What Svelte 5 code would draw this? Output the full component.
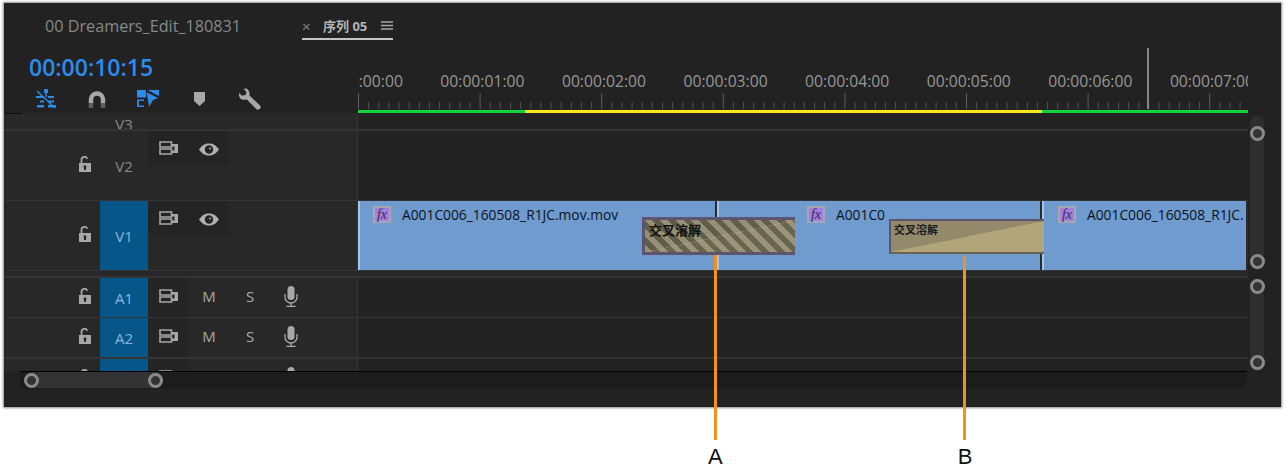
<script>
  const rulerLabels = ['00:00:00:00', '00:00:01:00', '00:00:02:00', '00:00:03:00', '00:00:04:00', '00:00:05:00', '00:00:06:00', '00:00:07:00']
  const majorStep = 121.6
  const minorStep = majorStep / 12
  const ticks = Array.from({ length: 88 }, (_, i) => i)

  const clips = [
    { width: 359, pad: 13, name: 'A001C006_160508_R1JC.mov.mov' },
    { width: 325, pad: 88, name: 'A001C0' },
    { width: 206, pad: 14, name: 'A001C006_160508_R1JC.' }
  ]
</script>

{#snippet lock()}
  <svg width="14" height="16" viewBox="0 0 14 16">
    <path d="M3.500 7V4a3 3 0 0 1 5.800-1.200" fill="none" stroke="#a8a8a8" stroke-width="1.800" />
    <path fill-rule="evenodd" fill="#a8a8a8" d="M1 7h12v9H1zM7 9.300a1.500 1.500 0 0 0-1 2.600V14h2v-2.100a1.500 1.500 0 0 0-1-2.600z" />
  </svg>
{/snippet}

{#snippet sync()}
  <svg width="19" height="14" viewBox="0 0 19 14">
    <path fill="none" stroke="#a8a8a8" stroke-width="1.600" d="M1 1h11.500v5H1zM1 8h11.500v5H1z" />
    <path fill="#a8a8a8" d="M13 3h6v9h-6V9.500h2.500V5.500H13z" />
  </svg>
{/snippet}

{#snippet eye()}
  <svg class="eye" width="20" height="13" viewBox="0 0 20 13">
    <path fill-rule="evenodd" fill="#b0b0b0" d="M0 6.500C3 2 6.500 0.500 10 0.500S17 2 20 6.500C17 11 13.500 12.500 10 12.500S3 11 0 6.500zM10 2.300a4.200 4.200 0 1 0 0 8.400 4.200 4.200 0 0 0 0-8.400z" />
    <circle cx="10" cy="6.500" r="2.800" fill="#262626" />
    <circle cx="11" cy="5.500" r="1" fill="#b0b0b0" />
  </svg>
{/snippet}

{#snippet mic()}
  <svg width="14" height="21" viewBox="0 0 14 21">
    <rect x="3.500" y="0" width="7" height="14" rx="3.500" fill="#a8a8a8" />
    <path d="M1 8v3a6 6 0 0 0 12 0V8" fill="none" stroke="#a8a8a8" stroke-width="1.300" />
    <path d="M7 17v3M2.500 20.300h9" stroke="#a8a8a8" stroke-width="1.300" />
  </svg>
{/snippet}

{#snippet handle()}
  <span class="handle"></span>
{/snippet}

{#snippet fx()}
  <span class="fx">fx</span>
{/snippet}

<div class="page">
  <div class="panel">
    <div class="tabs">
      <span class="project-tab">00 Dreamers_Edit_180831</span>
      <div class="seq-tab">
        <span class="close">×</span>
        <span class="seq-name">序列 05</span>
        <svg width="12" height="9" viewBox="0 0 12 9"><path d="M0 1h12M0 4.500h12M0 8h12" stroke="#a8a8a8" stroke-width="1.300" /></svg>
      </div>
    </div>

    <div class="top">
      <div class="controls">
        <div class="timecode">00:00:10:15</div>
        <div class="tools">
          <span class="tool">
            <svg width="22" height="20" viewBox="0 0 22 20">
              <g fill="#2d8ceb">
                <rect x="9" y="0" width="4" height="4" />
                <rect x="10.300" y="4" width="1.400" height="4" />
                <rect x="1" y="7" width="8" height="2" /><rect x="13" y="7" width="6" height="2" />
                <rect x="5" y="11.500" width="4" height="2" /><rect x="13" y="11.500" width="6" height="2" />
                <rect x="2" y="16" width="7" height="2.500" /><rect x="13" y="16" width="8" height="2.500" />
              </g>
              <path d="M2 2l18 17" stroke="#2d8ceb" stroke-width="1.500" />
            </svg>
          </span>
          <span class="tool">
            <svg width="18" height="17" viewBox="0 0 18 17">
              <path d="M3 12V8.500a6 6 0 0 1 12 0V12" fill="none" stroke="#a8a8a8" stroke-width="4.500" />
              <path d="M0.750 12h4.500v5H0.750zM12.750 12h4.500v5h-4.500z" fill="#5e5e5e" />
            </svg>
          </span>
          <span class="tool">
            <svg width="22" height="18" viewBox="0 0 22 18">
              <g fill="#2d8ceb">
                <path d="M0 0h9v7.500H0zM0 9.500h7v1.600H1.800v4.300H7V17H0z" />
                <path d="M10.500 0H22v6z" />
                <path d="M9 1.500l13 6.500-6 2.500L12 18z" stroke="#222" stroke-width="0.800" />
              </g>
            </svg>
          </span>
          <span class="tool">
            <svg width="11" height="14" viewBox="0 0 11 14"><path fill="#a8a8a8" d="M0 0h11v9l-5.500 5L0 9z" /></svg>
          </span>
          <span class="tool">
            <svg width="22" height="22" viewBox="0 0 22 22">
              <path fill="#a8a8a8" d="M7.500 0.500L4.500 0.800 7.500 4 6.500 7 3 7.800 0 5c-.4 3 .6 5.500 3 6.500 1.600.6 3.300.3 4.500-.3l10 10c1 .8 2.800 .6 3.700-.6.800-1 .7-2.300-.2-3.200L10.500 7.500c.5-3-.8-6-3-7z" />
            </svg>
          </span>
        </div>
      </div>
      <div class="ruler">
        <div class="ruler-labels">
          {#each rulerLabels as label}
            <span>{label}</span>
          {/each}
        </div>
        <svg class="ticks" width="890" height="17" viewBox="0 0 890 17">
          {#each ticks as i}
            <line x1={i * minorStep + 0.5} x2={i * minorStep + 0.5} y1={i % 12 === 0 ? 0 : 9} y2="16" stroke={i % 12 === 0 ? '#5c5c5c' : '#505050'} />
          {/each}
        </svg>
        <div class="render-bar">
          <i class="green" style="width:167px"></i>
          <i class="yellow" style="width:517px"></i>
          <i class="green" style="width:206px"></i>
        </div>
        <div class="playhead"></div>
      </div>
    </div>

    <div class="body">
      <div class="tracks">
        <div class="row v3">
          <div class="head"><span class="lock-cell"></span><span class="tname">V3</span></div>
          <div class="lane"></div>
        </div>
        <div class="row tall">
          <div class="head">
            <span class="lock-cell">{@render lock()}</span>
            <span class="tname">V2</span>
            <div class="btns"><span>{@render sync()}</span><span>{@render eye()}</span></div>
          </div>
          <div class="lane"></div>
        </div>
        <div class="row tall">
          <div class="head">
            <span class="lock-cell">{@render lock()}</span>
            <span class="tname on">V1</span>
            <div class="btns"><span>{@render sync()}</span><span>{@render eye()}</span></div>
          </div>
          <div class="lane clips">
            {#each clips as clip}
              <div class="clip" style="width:{clip.width}px;padding-left:{clip.pad}px">
                {@render fx()}
                <span class="clip-name">{clip.name}</span>
              </div>
            {/each}
            <div class="trans-a"><span>交叉溶解</span></div>
            <div class="trans-b"><span>交叉溶解</span></div>
          </div>
        </div>
        <div class="spacer"></div>
        {#each ['A1', 'A2'] as name}
          <div class="row audio">
            <div class="head">
              <span class="lock-cell">{@render lock()}</span>
              <span class="tname on">{name}</span>
              <div class="btns one"><span>{@render sync()}</span></div>
              <span class="letter">M</span>
              <span class="letter">S</span>
              <span class="letter">{@render mic()}</span>
            </div>
            <div class="lane"></div>
          </div>
        {/each}
        <div class="row a3">
          <div class="head">
            <span class="lock-cell">{@render lock()}</span>
            <span class="tname on"></span>
            <div class="btns one"><span>{@render sync()}</span></div>
            <span class="letter"></span>
            <span class="letter"></span>
            <span class="letter">{@render mic()}</span>
          </div>
          <div class="lane"></div>
        </div>
      </div>
      <div class="vscroll">
        <div class="vbar top-bar">{@render handle()}{@render handle()}</div>
        <div class="vbar low-bar">{@render handle()}{@render handle()}</div>
      </div>
    </div>

    <div class="hscroll">
      <div class="hfill">{@render handle()}{@render handle()}</div>
    </div>
  </div>

  <div class="leader a"></div>
  <div class="leader b"></div>
  <div class="callouts">
    <span class="ca">A</span>
    <span class="cb">B</span>
  </div>
</div>

<style>
  :global(body) {
    margin: 0;
    background: #fff;
  }

  .page {
    position: relative;
    width: 1286px;
    height: 473px;
    overflow: hidden;
    padding-top: 3px;
    box-sizing: border-box;
    font-family: "Open Sans", sans-serif;
  }

  .panel {
    margin-left: 4px;
    width: 1277px;
    height: 404px;
    background: #222;
    box-shadow: 0 0 2px 1px #8c8c8c;
    overflow: hidden;
  }

  .tabs {
    height: 41px;
    display: flex;
    align-items: flex-start;
  }

  .project-tab {
    margin: 12px 0 0 41px;
    width: 257px;
    font-size: 16.200px;
    line-height: 22px;
    color: #858a8d;
  }

  .seq-tab {
    width: 91px;
    height: 35px;
    margin-top: 2px;
    box-sizing: border-box;
    border-bottom: 2px solid #c4c4c4;
    display: flex;
    align-items: center;
    font-size: 13px;
    color: #b4b4b4;
    padding-top: 8px;
  }

  .close {
    width: 21px;
    font-size: 15px;
    color: #8a8a8a;
  }

  .seq-name {
    width: 58px;
    font-weight: 700;
    font-family: "Open Sans", "Noto Sans CJK SC", sans-serif;
  }

  .top {
    display: flex;
    height: 69px;
  }

  .controls {
    width: 354px;
    box-sizing: border-box;
    padding: 8px 0 0 25px;
  }

  .timecode {
    font-size: 23px;
    line-height: 30px;
    font-weight: 600;
    color: #2d8ceb;
  }

  .tools {
    display: flex;
    align-items: center;
    height: 24px;
    margin-top: 5px;
    margin-left: -8.500px;
  }

  .tool {
    width: 51px;
    display: flex;
    justify-content: center;
    align-items: center;
  }

  .ruler {
    position: relative;
    width: 890px;
    overflow: hidden;
  }

  .ruler-labels {
    display: flex;
    margin-left: -58px;
    margin-top: 25px;
    height: 24px;
  }

  .ruler-labels span {
    flex: 0 0 121.600px;
    text-align: center;
    font-size: 15.700px;
    line-height: 24px;
    color: #979797;
  }

  .ticks {
    display: block;
    height: 17px;
  }

  .render-bar {
    display: flex;
    height: 3px;
  }

  .render-bar i {
    display: block;
  }

  .green {
    background: #12d43c;
  }

  .yellow {
    background: #fbe81c;
  }

  .playhead {
    position: absolute;
    left: 789px;
    top: 4px;
    width: 2px;
    height: 61px;
    background: #858585;
  }

  .body {
    display: flex;
  }

  .tracks {
    width: 1244px;
  }

  .row {
    display: flex;
    border-bottom: 1px solid #343434;
    box-sizing: border-box;
    overflow: hidden;
  }

  .v3 {
    height: 18px;
    border-bottom-width: 2px;
  }

  .tall {
    height: 70px;
  }

  .audio {
    height: 40px;
  }

  .audio + .audio {
    height: 41px;
    border-bottom-width: 2px;
  }

  .a3 {
    height: 12px;
    border-bottom: 0;
    align-items: flex-start;
  }

  .a3 .head {
    height: 39px;
    flex: none;
  }

  .spacer {
    height: 7px;
    background: #282828;
    border-bottom: 2px solid #343434;
    box-sizing: border-box;
  }

  .head {
    position: relative;
    width: 353px;
    flex: none;
    border-right: 1px solid #343434;
    background: #282828;
    display: flex;
    align-items: flex-start;
  }

  .v3 .head::before {
    content: '';
    position: absolute;
    left: 1px;
    top: 0;
    width: 17px;
    height: 1px;
    background: #0c0c0c;
  }

  .lock-cell {
    width: 96px;
    flex: none;
    height: 100%;
    display: flex;
    align-items: center;
    justify-content: flex-end;
    padding: 0 8px 4px 0;
    box-sizing: border-box;
  }

  .tname {
    width: 48px;
    flex: none;
    height: 100%;
    display: flex;
    align-items: center;
    justify-content: center;
    font-size: 15px;
    color: #8a8a8a;
    padding-top: 1px;
    box-sizing: border-box;
  }

  .v3 .tname {
    padding-top: 0;
    line-height: 22px;
    height: 22px;
    align-items: flex-start;
  }

  .tname.on {
    background: #07568a;
    color: #8ab6dc;
  }

  .btns {
    display: flex;
    background: #242424;
    height: 34px;
  }

  .btns span {
    width: 40.500px;
    display: flex;
    align-items: center;
    justify-content: center;
    padding-left: 1px;
    box-sizing: border-box;
  }

  .eye {
    margin-top: 3px;
  }

  .btns.one {
    height: 100%;
    padding-bottom: 4px;
    box-sizing: border-box;
    background: #252525;
  }

  .letter {
    width: 41px;
    height: 100%;
    flex: none;
    display: flex;
    align-items: center;
    justify-content: center;
    font-size: 15px;
    color: #a8a8a8;
    padding-bottom: 3px;
    box-sizing: border-box;
  }

  .lane {
    width: 890px;
    background: #232323;
  }

  .clips {
    display: flex;
    position: relative;
  }

  .clip {
    background: #6f9bcf;
    border-left: 2px solid #a7c3e6;
    box-shadow: inset -2px 0 0 #2a2a2a;
    box-sizing: border-box;
    display: flex;
    align-items: flex-start;
    padding-top: 5px;
    overflow: hidden;
    white-space: nowrap;
  }

  .clip:last-of-type {
    box-shadow: none;
  }

  .fx {
    width: 14px;
    height: 13px;
    flex: none;
    border: 2px solid #a7a7b4;
    background: #a27fdb;
    color: #3a2a5c;
    font: italic 14px/13px "Liberation Serif", serif;
    text-align: center;
  }

  .clip-name {
    margin-left: 11px;
    font-size: 13.800px;
    line-height: 18px;
    color: #0b1320;
  }

  .trans-a {
    position: absolute;
    left: 284px;
    top: 16px;
    width: 153px;
    height: 38px;
    box-sizing: border-box;
    border: 3px solid #5d5470;
    border-right-width: 0;
    background:
      linear-gradient(to bottom right, transparent 49.500%, rgba(255, 240, 190, 0.2) 50%, rgba(255, 240, 190, 0.2) 50.800%, rgba(255, 240, 190, 0.05) 51.200%),
      repeating-linear-gradient(45deg, #978f73 0 5.500px, #605d4b 5.500px 11px);
    font: 700 13px/19px "Noto Sans CJK SC", sans-serif;
    color: #111;
    padding-left: 4px;
  }

  .trans-b {
    position: absolute;
    left: 531px;
    top: 18px;
    width: 155px;
    height: 35px;
    box-sizing: border-box;
    border: 2px solid #5d5470;
    border-right-width: 0;
    border-bottom-color: #6a6250;
    background: linear-gradient(to bottom right, #938a6c 50%, #b1a57a 50%);
    font: 700 11px/16px "Noto Sans CJK SC", sans-serif;
    color: #1a1a1a;
    padding-left: 3px;
  }

  .vscroll {
    width: 33px;
    box-sizing: border-box;
    padding-left: 2px;
  }

  .vbar {
    width: 14px;
    background: #2e2e2e;
    border-radius: 7px;
    display: flex;
    flex-direction: column;
    justify-content: space-between;
    align-items: center;
    box-sizing: border-box;
  }

  .top-bar {
    margin-top: 3px;
    height: 154px;
    padding: 10px 0 1px;
  }

  .low-bar {
    margin-top: 8px;
    height: 93px;
    padding: 1px 0 1px;
  }

  .handle {
    display: block;
    width: 15px;
    height: 15px;
    box-sizing: border-box;
    border: 3px solid #8a8a8a;
    border-radius: 50%;
    background: #333;
    flex: none;
  }

  .hscroll {
    margin-left: 16px;
    width: 1227px;
    height: 18px;
    border-top: 1px solid #000;
    box-sizing: border-box;
    background: #1c1c1c;
    border-radius: 0 0 9px 0;
  }

  .hfill {
    margin-left: 4px;
    width: 139px;
    height: 16px;
    background: #333;
    border-radius: 8px;
    display: flex;
    justify-content: space-between;
    align-items: center;
  }

  .leader {
    position: absolute;
    top: 255px;
    width: 3px;
    height: 185px;
    background: #f0931e;
  }

  .leader.a {
    left: 714px;
  }

  .leader.b {
    left: 963px;
  }

  .callouts {
    position: absolute;
    top: 442px;
    left: 0;
    display: flex;
    font: 22px/30px "Liberation Sans", sans-serif;
    color: #111;
  }

  .ca {
    margin-left: 708px;
  }

  .cb {
    margin-left: 235px;
  }
</style>
